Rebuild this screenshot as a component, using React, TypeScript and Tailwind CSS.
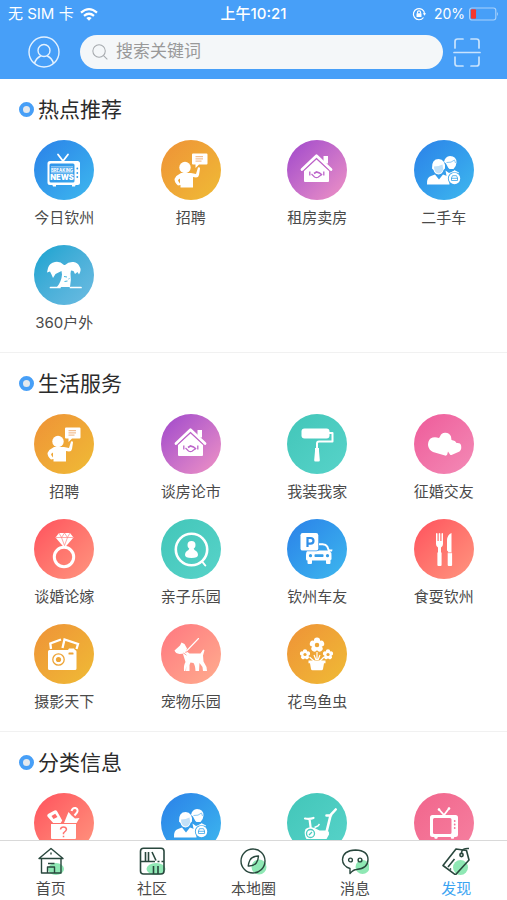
import { useState } from 'react';
import type { ReactNode } from 'react';
import clsx from 'clsx';

interface Entry {
  label: string;
  tone: string;
  icon: ReactNode;
}

interface SectionProps {
  title: string;
  entries: Entry[];
}

const tones = {
  blue: 'from-[#2c80e8] to-[#3fb8ee]',
  orange: 'from-[#ee9237] to-[#efbb35]',
  purple: 'from-[#a045cb] to-[#f092c4]',
  cyan: 'from-[#0aa3d0] to-[#6cbce2]',
  teal: 'from-[#42c6b9] to-[#57d3c9]',
  pink: 'from-[#ee5a9a] to-[#f38ab6]',
  rose: 'from-[#f1658c] to-[#f680a0]',
  red: 'from-[#ff4f5d] to-[#ff957f]',
  salmon: 'from-[#ff7680] to-[#ffad8e]',
};

/* ---------- Category glyphs, all on a 60x60 canvas ---------- */

const NewsTv = () => (
  <>
    <path d="M24 14.5 29 21 34 14.5" fill="none" stroke="#fff" strokeWidth="1.8" strokeLinecap="round" />
    <path
      fillRule="evenodd"
      d="M16 21h27.500a2.500 2.500 0 0 1 2.500 2.500v19a2.500 2.500 0 0 1-2.500 2.500H16a2.500 2.500 0 0 1-2.500-2.500v-19A2.500 2.500 0 0 1 16 21Zm1 2.500a1.500 1.500 0 0 0-1.500 1.500v16a1.500 1.500 0 0 0 1.500 1.500h22a1.500 1.500 0 0 0 1.500-1.500v-16a1.500 1.500 0 0 0-1.500-1.500Z"
    />
    <path d="M18 44h4v2.500h-3zM38 44h4l-1 2.500h-3z" />
    <path d="M17 26.500h22v.8H17zM17 32.500h22v.8H17z" opacity=".8" />
    <text x="28" y="31.600" fontSize="4.200" fontWeight="800" textAnchor="middle">BREAKING</text>
    <text x="28" y="40.400" fontSize="7.600" fontWeight="900" textAnchor="middle">NEWS</text>
    <g fill="#2f9be9">
      <circle cx="43.300" cy="28.500" r=".9" />
      <circle cx="43.300" cy="33" r=".9" />
      <circle cx="43.300" cy="37" r=".9" />
    </g>
  </>
);

const Recruit = () => (
  <>
    <circle cx="24" cy="27.500" r="5.700" />
    <path d="M32 13.500h13.500a1 1 0 0 1 1 1v9a1 1 0 0 1-1 1H38l-3.500 3.500v-3.500H32a1 1 0 0 1-1-1v-9a1 1 0 0 1 1-1Z" />
    <path d="M34.500 16.700h7.500M34.500 18.900h7.500M34.500 21.100h6" stroke="#efb07a" strokeWidth="1" />
    <path
      fillRule="evenodd"
      d="M20 33h10l5 1 2-6.500q1.800-.8 2 1l-1 6.500q-.5 2.500-3 2.500l-3-.5V47.500H19.500V45l-2.500.5q-3.500-3-3.500-6.500 2-4 6.500-6Zm-1 5.500-2 1.500q.3 1.800 2 3.500Z"
    />
  </>
);

const HouseDeal = () => (
  <>
    <path d="M36.500 16h4.500v7.500h-4.500z" />
    <path d="M15 29.500 29.500 15.800 44 29.500" fill="none" stroke="#fff" strokeWidth="2.800" strokeLinecap="round" strokeLinejoin="round" />
    <path d="M29.500 19.500 42 31v10a1 1 0 0 1-1 1H18a1 1 0 0 1-1-1V31Z" />
    <path d="m17 30.200 12.500-11.500L42 30.200" fill="none" stroke="#bd62c8" strokeWidth=".8" />
    <g fill="none" stroke="#bd66cb">
      <path d="M22.800 31.500v4M36.800 31.500v4" strokeWidth="1.300" />
      <path d="m24.500 34 3 3q2 1.200 3.500.3l4-3" strokeWidth="1.200" />
      <path d="m27 33.500 2.500-1.500 3 1 2.500 2" strokeWidth="1.600" />
    </g>
  </>
);

const CarBuyers = () => (
  <>
    <path d="M30 22q1-5.500 6-6 6.500.2 6.500 6.500-.3 4.500-3 6.500h-4q-1.500-1.200-2.500-3.500-.5-2.500-3-3.500Z" />
    <path d="M32.500 22.500q5 .5 8-2.500l1 3" fill="none" stroke="#7cc1f2" strokeWidth=".9" />
    <path d="M31.500 30.500 35 33l6-2.500 4 2-1 2-11 4Z" />
    <path d="M18 28.500q-.5-9.500 6.700-9.500 7 .5 6.300 9.500l-1.500 1.500q-1 4-5 4.500-4-.5-5-4.500Z" />
    <path d="M20 26.500q5 0 8.500-2l.7 4.500q-1.200 4.300-4.700 4.500-3.300-.3-4.300-4.500Z" fill="#3298e9" opacity=".3" />
    <path d="M13 44.500q-.5-7.500 4-8.500l4-1.500 4 5 4-5 4 1.500q2.500 1.500 2.500 8.500Z" />
    <circle cx="40.500" cy="38.500" r="6.600" fill="#3aa6eb" />
    <circle cx="40.500" cy="38.500" r="5.700" />
    <path d="m37.800 32.200 2.700-2 2.700 2z" />
    <path d="m37.500 38 1-2.300h4l1 2.300v2.500h-6Z" fill="none" stroke="#3aa6eb" strokeWidth=".8" />
    <path d="M37 38.300h7" stroke="#3aa6eb" strokeWidth=".8" />
  </>
);

const Palm = () => (
  <>
    <path d="M30 20q-4-4-9-3-5.500 1-7 6l-1 4.500 3-1 1.500 3 1.500 3.500 2.500-4 6-3 .5 3.500q-.5 7-5 12.500h13q1.500-6.500.5-13.500l.5-3 2.500.5 1.500 3 2.500-2 1.500 2.500q3-5 .5-8-1.500-4-6-4.500-5-.5-8.500 3Z" />
    <path d="M16.500 42.500h9.500M36.500 42.500h10.500" stroke="#fff" strokeWidth="1.700" strokeLinecap="round" />
    <path d="m30 31.500 3 .5M30.500 36.500l3-.5M34.500 34l1-.5" stroke="#31adda" strokeWidth=".9" />
  </>
);

const Roller = () => (
  <>
    <rect x="14.500" y="14.500" width="28" height="10" rx="3" />
    <path d="M42 19h3.500v8.500H32q-2 0-2 2V35" fill="none" stroke="#fff" strokeWidth="2" strokeLinejoin="round" />
    <path d="M28 34h4v3l.8 9a1.300 1.300 0 0 1-1.300 1.500h-3A1.300 1.300 0 0 1 27.200 46l.8-9Z" />
  </>
);

const Hearts = () => (
  <path d="M14 31q0-4.500 2.500-6.500 3.500-2 8.500-.5l1-1.500q1.500-4 5.500-3.700 4 .2 5.500 3.700l.5 3.500q4 .5 5 3 4-.5 4.500 2 1 4.500-1.500 6.500L37.500 41q-1 .3-1.500-.5l-2-3-.8 3q-.7 1.500-2.200 1L19 38q-4.500-2-5-7Z" />
);

const Ring = () => (
  <>
    <circle cx="30" cy="38" r="9.700" fill="none" stroke="#fff" strokeWidth="3" />
    <path d="M25 14h11l3.500 4.500L30.500 29 21.500 18.500Z" />
    <path d="M22 18.500h17M25 14l2.500 4.500 3 8 3-8L36 14M27.500 18.500l3-4.500 3 4.500" fill="none" stroke="#ff8482" strokeWidth=".7" />
  </>
);

const KidCircle = () => (
  <>
    <circle cx="30.500" cy="30.500" r="15.700" fill="none" stroke="#fff" strokeWidth="2.600" />
    <path d="m41.500 43 2.800 3.500" stroke="#fff" strokeWidth="2" strokeLinecap="round" />
    <circle cx="30.500" cy="26" r="4" />
    <path d="M28.500 29h4l1 2q3.500 1.500 3.500 5 0 3-6.500 3T24 36q0-3.500 3.500-5Z" />
  </>
);

const ParkedCar = () => (
  <>
    <path d="M32 25.200h3.500q3.500.2 4.700 2.300l2 5" fill="none" stroke="#fff" strokeWidth="2" />
    <path d="M42 30.500h3.500l-.5 2h-3z" />
    <path d="M21 31.500h21q2.500 1.500 2.500 5v3.500a1 1 0 0 1-1 1V44a1 1 0 0 1-1 1h-2.500a1 1 0 0 1-1-1v-2.500h-14V44a1 1 0 0 1-1 1h-2.500a1 1 0 0 1-1-1v-2.500a1.500 1.500 0 0 1-1.500-1.500v-4q0-2.500 1-4Z" />
    <g fill="#359de9">
      <circle cx="23.500" cy="36.700" r="1.600" />
      <circle cx="40.500" cy="36.700" r="1.600" />
      <rect x="27.500" y="35.200" width="9" height="2.800" rx=".7" />
    </g>
    <rect x="13" y="13.500" width="19" height="18.800" rx="2.500" fill="#3193e9" />
    <rect x="13.500" y="14" width="17.800" height="17.600" rx="2.200" />
    <path d="M20.500 28v-9h3q3 0 3 2.800t-3 2.800h-3" fill="none" stroke="#318fe8" strokeWidth="2.200" />
  </>
);

const Cutlery = () => (
  <>
    <path d="M22 14.500q.8-1 1.500 0V22h1.200v-7.500q.8-1 1.600 0V22h1.200v-7.500q.8-1 1.500 0V25q0 2.500-2 3.500v4.500l.6 1v12a1 1 0 0 1-1 1h-2.200a1 1 0 0 1-1-1V34l.6-1v-4.500q-2-1-2-3.500Z" />
    <path d="M37.500 14v19l.6 1v12a1 1 0 0 1-1 1h-2.400a1 1 0 0 1-1-1V34l.5-1.500-1.200-1V21q.5-5.500 4.500-7Z" />
    <path d="M33.500 33.700h5" stroke="#ff7c73" strokeWidth=".7" />
  </>
);

const Camera = () => (
  <>
    <path d="m17 25-.7-5.500L27 15.500M28.500 24l2-8.500L44 20l-1.500 5" fill="none" stroke="#fff" strokeWidth="2.300" />
    <path d="M15.500 26H34l1-1.500h5L41 26a1.500 1.500 0 0 1 1.500 1.500v17A1.500 1.500 0 0 1 41 46H15.500a1.500 1.500 0 0 1-1.500-1.500v-17a1.500 1.500 0 0 1 1.500-1.500Z" />
    <circle cx="24.500" cy="35.500" r="5.700" fill="none" stroke="#eea436" strokeWidth="1.300" />
    <circle cx="24.500" cy="35.500" r="2.600" fill="#eea436" />
    <rect x="34.500" y="28.500" width="5" height="2" rx=".6" fill="#eea436" />
  </>
);

const Dog = () => (
  <>
    <path d="M37.500 14.500 25.500 27" stroke="#fff" strokeWidth="1.100" strokeLinecap="round" />
    <path d="m13.500 26.500 5.500-5 1.500-3 3 1.500 2.500 4.500-2 5-5.500.5q-4-.5-5-3.500Z" />
    <path d="m22 30 4.500-2 2 1.500h11l2.700-4 1.300.8-1.500 5.200.5 6 3 5.500.5 4h-4l-.5-4-3-4-.5 8h-3.500q-.2-5.500-2-8l-3-.5-1 2.500v6h-3.500l.3-5-.8 5H23q-.5-6 1.500-9Z" />
    <path d="m22.500 29 3 2.200" stroke="#ff8f86" strokeWidth=".8" />
  </>
);

const Bloom = ({ x, y, r }: { x: number; y: number; r: number }) => (
  <g transform={`translate(${x} ${y}) scale(${r})`}>
    {[0, 72, 144, 216, 288].map((a) => (
      <circle key={a} cx="0" cy="-.62" r=".44" transform={`rotate(${a})`} />
    ))}
    <circle r=".5" />
    <circle r=".32" fill="#eea737" />
  </g>
);

const Flowers = () => (
  <>
    <Bloom x={30} y={21} r={7} />
    <Bloom x={18} y={30.5} r={5} />
    <Bloom x={41} y={30.5} r={5} />
    <path d="M30 28v8M22.500 33l5 4.500M37 33l-4.500 4.500M27 31l2 5M33 31l-2 5" stroke="#fff" strokeWidth="1.200" />
    <path d="M21.500 36.500h17v2.700H37L36 45a1.500 1.500 0 0 1-1.500 1.200h-9A1.500 1.500 0 0 1 24 45l-1-5.800h-1.500Z" />
  </>
);

const LostBox = () => (
  <>
    <path d="m14 21 6.500-3.500q1.700-.7 2.700 1l5 9-1.500 2.500h-7.500l-5.700-6.500q-.8-1.500.5-2.500Z" />
    <path d="m17.500 23 3.700-2.300 2.300 3.300-4 2Z" fill="#ff6a6b" />
    <path d="m30 30 4.500-11 3 3.500 3.500 3 4.500-.5-3 5Z" />
    <path d="M37.500 18q1-3.500 4-3 3.200 1.200 1.500 4.500l-2.500 3" fill="none" stroke="#fff" strokeWidth="2" />
    <path d="M17 31h25v14a1 1 0 0 1-1 1H18a1 1 0 0 1-1-1Z" />
    <path d="M26.500 36.500q.3-2.500 3-2.500t3 2.300q0 1.500-3 3.700v1.200M29.500 42.700v1.500" fill="none" stroke="#ff7470" strokeWidth="1.500" />
  </>
);

const ExerciseBike = () => (
  <>
    <path d="M18 25.500q4.500 1 8.500-.5M22.500 26l1.200 9" fill="none" stroke="#fff" strokeWidth="2.200" strokeLinecap="round" />
    <path d="M39.500 39 43.700 22l5-5.500M39.500 22.500h4.500" fill="none" stroke="#fff" strokeWidth="2.600" strokeLinecap="round" />
    <path d="M27.500 34.500 31 33l1.500-2" fill="none" stroke="#fff" strokeWidth="1.400" />
    <path d="M18.500 36q4-3 9-1l5 2.500h8q2 1 1.500 4l-2.500 4.500H19.500q-3-5-1-10Z" />
    <circle cx="23.500" cy="40.500" r="4" fill="none" stroke="#4cccc0" strokeWidth="1.300" />
    <path d="m22 42 3-3" stroke="#4cccc0" strokeWidth="1.200" />
  </>
);

const RetroTv = () => (
  <>
    <path d="M25 16.500 30 22l5-6.500" fill="none" stroke="#fff" strokeWidth="1.800" strokeLinecap="round" />
    <circle cx="25" cy="16.500" r="1.300" />
    <circle cx="35" cy="15.500" r="1.300" />
    <path
      fillRule="evenodd"
      d="M18.500 22h23a2.500 2.500 0 0 1 2.500 2.500v17a2.500 2.500 0 0 1-2.500 2.500h-23a2.500 2.500 0 0 1-2.500-2.500v-17a2.500 2.500 0 0 1 2.500-2.500Zm2 3a1.500 1.500 0 0 0-1.500 1.500v13a1.500 1.500 0 0 0 1.500 1.500h15.500a1.500 1.500 0 0 0 1.500-1.500v-13a1.500 1.500 0 0 0-1.500-1.500Z"
    />
    <path d="M20 43.500h4l-.8 2.300h-2.400zM36.500 43.500h4l-.8 2.300h-2.400z" />
    <g fill="#f3749a">
      <circle cx="40.700" cy="28" r=".9" />
      <circle cx="40.700" cy="31.500" r=".9" />
      <circle cx="40.700" cy="35" r=".9" />
    </g>
  </>
);

/* ---------- Tab bar icons, 28x28 ---------- */

const HomeTab = () => (
  <>
    <ellipse cx="19" cy="22" rx="8" ry="6" fill="#8fe8b4" stroke="none" />
    <path d="M14 1.500 26 11.500H2Z" />
    <path d="M4.500 12v14h19.500V12M10.500 26v-6h7v6M11 16.500h6.500" />
    <path d="M14 5.500v2" />
  </>
);

const CommunityTab = () => (
  <>
    <ellipse cx="18" cy="22" rx="9.500" ry="6" fill="#8fe8b4" stroke="none" />
    <g strokeWidth="1.600">
      <rect x="2.500" y="1.200" width="23.500" height="25.800" rx="3" />
      <path d="M3 14.500h14M19.500 14.500h2M23.500 14.500h2.500M7.500 5v9M10.500 5v9M14 5l4 8.500M15.500 19v8M20 19v8" />
    </g>
  </>
);

const LocalTab = () => (
  <>
    <circle cx="20" cy="20" r="7.500" fill="#8fe8b4" stroke="none" />
    <circle cx="14" cy="14" r="12" />
    <path d="M19.500 9q-6.500.3-8.500 4-1.500 3-1.800 6 5.500.3 8-3Q19.300 13 19.500 9Z" />
  </>
);

const MessageTab = () => (
  <>
    <circle cx="21.500" cy="20" r="7" fill="#8fe8b4" stroke="none" />
    <path d="M14.500 3q12.500.5 12.500 9.500 0 9-11.500 10-3 0-6.500 4v-5Q1.500 19 1.500 12.500 2 3.500 14.500 3Z" />
    <circle cx="9.500" cy="13" r="1.900" />
    <circle cx="19" cy="13" r="1.900" />
  </>
);

const DiscoverTab = () => (
  <>
    <circle cx="18.500" cy="20.500" r="7.500" fill="#8fe8b4" stroke="none" />
    <g strokeWidth="1.600">
      <path d="m14 2 10.500 1.500L27 13 13.500 27.800 1 18.500Z" />
      <circle cx="19.500" cy="8" r="1.600" />
      <path d="M19.500 6q0-5 7.500-4.500M12.500 12 6 20M9 21.500l-1 1" />
    </g>
  </>
);

/* ---------- Data ---------- */

const hot: Entry[] = [
  { label: '今日钦州', tone: tones.blue, icon: <NewsTv /> },
  { label: '招聘', tone: tones.orange, icon: <Recruit /> },
  { label: '租房卖房', tone: tones.purple, icon: <HouseDeal /> },
  { label: '二手车', tone: tones.blue, icon: <CarBuyers /> },
  { label: '360户外', tone: tones.cyan, icon: <Palm /> },
];

const life: Entry[] = [
  { label: '招聘', tone: tones.orange, icon: <Recruit /> },
  { label: '谈房论市', tone: tones.purple, icon: <HouseDeal /> },
  { label: '我装我家', tone: tones.teal, icon: <Roller /> },
  { label: '征婚交友', tone: tones.pink, icon: <Hearts /> },
  { label: '谈婚论嫁', tone: tones.red, icon: <Ring /> },
  { label: '亲子乐园', tone: tones.teal, icon: <KidCircle /> },
  { label: '钦州车友', tone: tones.blue, icon: <ParkedCar /> },
  { label: '食耍钦州', tone: tones.red, icon: <Cutlery /> },
  { label: '摄影天下', tone: tones.orange, icon: <Camera /> },
  { label: '宠物乐园', tone: tones.salmon, icon: <Dog /> },
  { label: '花鸟鱼虫', tone: tones.orange, icon: <Flowers /> },
];

const classified: Entry[] = [
  { label: '', tone: tones.red, icon: <LostBox /> },
  { label: '', tone: tones.blue, icon: <CarBuyers /> },
  { label: '', tone: tones.teal, icon: <ExerciseBike /> },
  { label: '', tone: tones.rose, icon: <RetroTv /> },
];

const tabs = [
  { label: '首页', icon: <HomeTab /> },
  { label: '社区', icon: <CommunityTab /> },
  { label: '本地圈', icon: <LocalTab /> },
  { label: '消息', icon: <MessageTab /> },
  { label: '发现', icon: <DiscoverTab /> },
];

/* ---------- Layout ---------- */

const StatusBar = () => (
  <div className="grid h-7 grid-cols-3 items-center px-2 text-[15px] text-white">
    <div className="flex items-center gap-1.5">
      <span>无 SIM 卡</span>
      <svg viewBox="0 0 18 13" className="h-[13px] w-[18px]" fill="none" stroke="#fff" strokeWidth="2.200">
        <path d="M1 4.700q8-7 16 0M4 7.900q5-4.300 10 0" />
        <path d="M6.300 10q2.700-2.200 5.400 0L9 12.800Z" fill="#fff" stroke="none" />
      </svg>
    </div>
    <span className="text-center font-medium">上午10:21</span>
    <div className="flex items-center justify-end">
      <svg viewBox="0 0 14 14" className="mr-2 size-3.5" fill="none" stroke="#fff" strokeWidth="1.200">
        <path d="M11.500 10.500A5.600 5.600 0 1 1 12.600 7" />
        <path d="M10.800 6.300h3.200L12.500 8.800Z" fill="#fff" stroke="none" />
        <rect x="4.500" y="6.300" width="5" height="3.700" rx=".5" fill="#fff" stroke="none" />
        <path d="M5.500 6.500V5.300a1.500 1.500 0 0 1 3 0v1.200" />
      </svg>
      <span className="mr-1 text-sm">20%</span>
      <svg viewBox="0 0 32 14" className="h-3.5 w-[30px]" fill="none">
        <rect x=".6" y=".6" width="28" height="12.800" rx="2.600" stroke="#a9d2fb" strokeWidth="1.200" />
        <path d="M30 4.800q2 2.200 0 4.400Z" fill="#a9d2fb" />
        <rect x="2" y="2" width="5.500" height="10" rx="1" fill="#f3382f" />
      </svg>
    </div>
  </div>
);

const SearchBar = () => (
  <div className="flex items-center pt-[7px] pr-[26px] pb-2.5 pl-7">
    <button type="button" aria-label="我的" className="mr-5">
      <svg viewBox="0 0 32 32" className="size-8" fill="none" stroke="#e4f2ff" strokeWidth="1.400">
        <circle cx="16" cy="16" r="15" />
        <circle cx="16" cy="14.500" r="6" />
        <path d="M6.500 27.500q1.500-5.500 6.300-7.500M25.500 27.500q-1.500-5.500-6.300-7.500" />
      </svg>
    </button>
    <label className="flex h-[34px] min-w-0 flex-1 items-center gap-2 rounded-full bg-[#f4f7f9] px-3">
      <svg viewBox="0 0 17 17" className="size-4 shrink-0" fill="none" stroke="#a5a9ad" strokeWidth="1.100">
        <circle cx="7.500" cy="7.500" r="6.600" />
        <path d="m12.300 12.300 4 4" />
      </svg>
      <input
        type="search"
        aria-label="搜索"
        placeholder="搜索关键词"
        className="min-w-0 flex-1 bg-transparent text-[17px] text-[#333] outline-none placeholder:text-[#999]"
      />
    </label>
    <button type="button" aria-label="扫一扫" className="ml-2.5">
      <svg viewBox="0 0 28 32" className="h-8 w-7" fill="none" stroke="#c9e3fd" strokeWidth="1.700" strokeLinecap="round">
        <path d="M1 16.500h26M2 12V5.500Q2 3 4.500 3H10M18 3h5.500Q26 3 26 5.500V12M2 21v6.500Q2 30 4.500 30H10M18 30h5.500q2.500 0 2.500-2.500V21" />
      </svg>
    </button>
  </div>
);

const Section = ({ title, entries }: SectionProps) => (
  <section className="border-b border-[#f1f1f1] pb-0.5">
    <h2 className="flex h-[61px] items-center gap-1 pl-[19px] text-[21px] text-[#2b2b2b]">
      <span className="size-[15px] rounded-full border-4 border-[#479ff7] bg-[#e4e9ee]" />
      {title}
    </h2>
    <div className="grid grid-cols-4 pl-px">
      {entries.map(({ label, tone, icon }, i) => (
        <a key={i} href="#" className="flex h-[105px] flex-col items-center gap-2">
          <span className={clsx('size-[60px] shrink-0 rounded-full bg-linear-to-br', tone)}>
            <svg viewBox="0 0 60 60" className="size-full" fill="#fff">
              {icon}
            </svg>
          </span>
          <span className="text-[15px] leading-5 text-[#4a4a4a]">{label}</span>
        </a>
      ))}
    </div>
  </section>
);

export default function App() {
  const [active, setActive] = useState('发现');

  return (
    <div className="flex h-screen flex-col bg-white font-[Inter,'Noto_Sans_CJK_SC',sans-serif]">
      <header className="bg-[#479ff8]">
        <StatusBar />
        <SearchBar />
      </header>

      <main className="min-h-0 flex-1 overflow-y-auto [scrollbar-width:none]">
        <Section title="热点推荐" entries={hot} />
        <Section title="生活服务" entries={life} />
        <Section title="分类信息" entries={classified} />
      </main>

      <nav className="grid h-[60px] grid-cols-5 border-t border-[#d9d9d9] bg-white">
        {tabs.map(({ label, icon }) => (
          <button
            key={label}
            type="button"
            onClick={() => setActive(label)}
            className={clsx(
              'flex flex-col items-center gap-1 pt-1.5 text-[15px] leading-5',
              active === label ? 'text-[#3ba4f2]' : 'text-[#4a4a4a]'
            )}
          >
            <svg viewBox="0 0 28 28" className="size-7" fill="none" stroke="#29473d" strokeWidth="1.400" strokeLinejoin="round">
              {icon}
            </svg>
            {label}
          </button>
        ))}
      </nav>
    </div>
  );
}
